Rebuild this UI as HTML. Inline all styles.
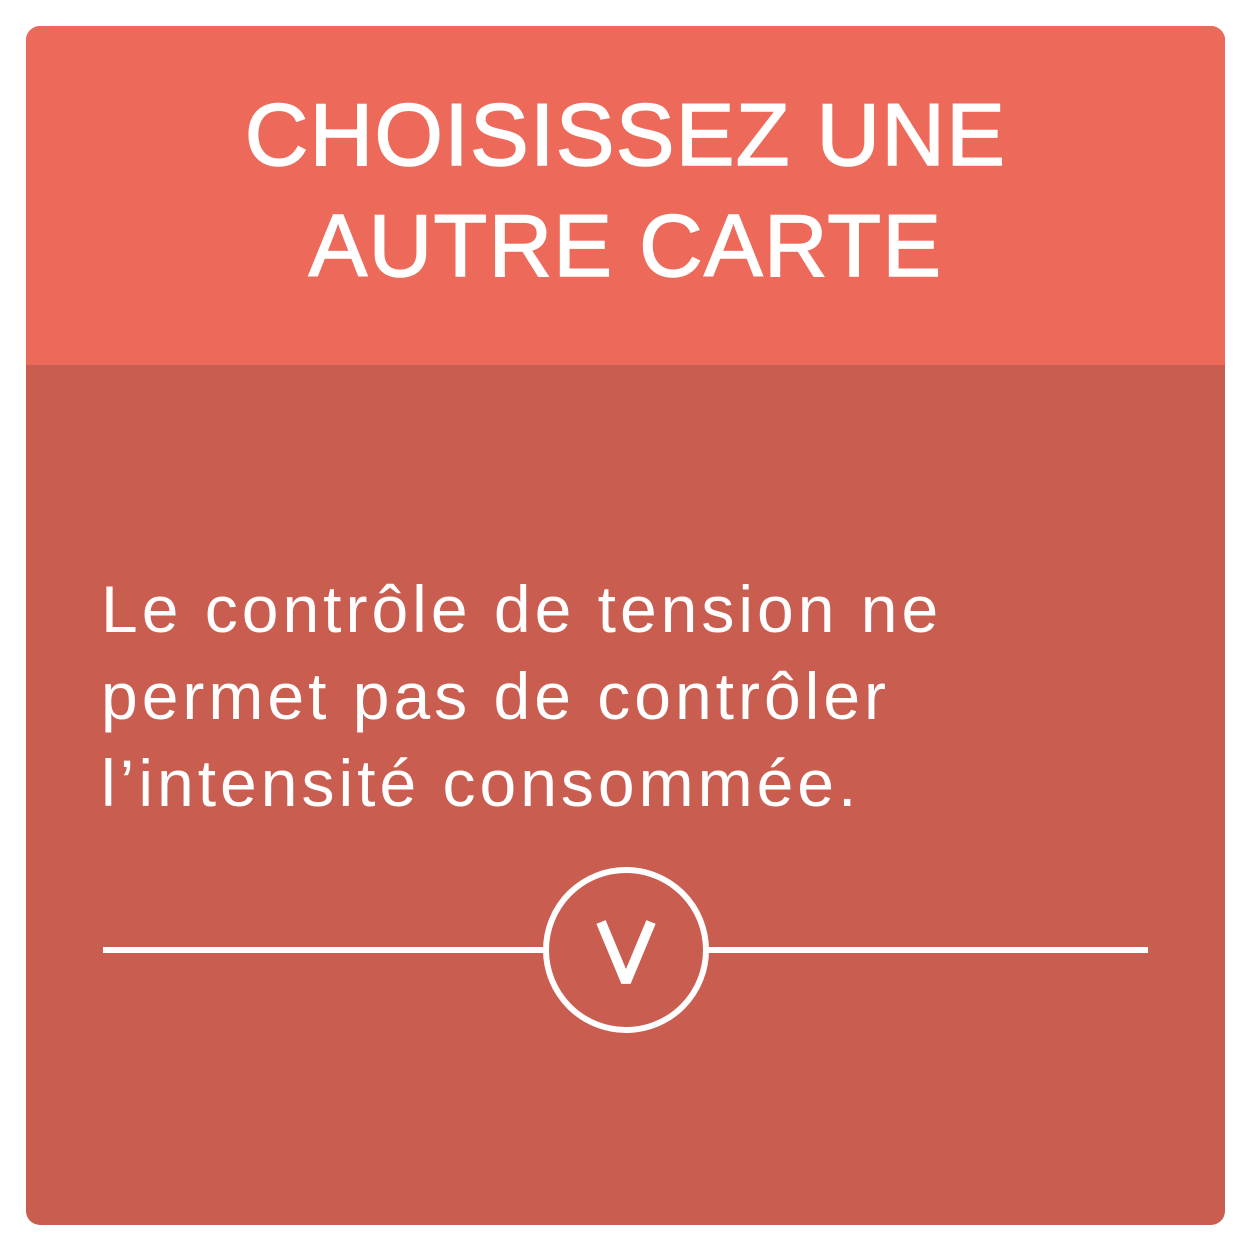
<!DOCTYPE html>
<html><head><meta charset="utf-8"><style>
html,body{margin:0;padding:0;background:#fff;width:1251px;height:1251px;overflow:hidden}
.card{position:absolute;left:26px;top:26px;width:1199px;height:1199px;border-radius:14px;overflow:hidden;background:#C95D50}
.head{position:absolute;left:0;top:0;width:100%;height:339px;background:#ED6A5B}
.t{position:absolute;left:0;width:100%;text-align:center;color:#fff;font-family:"Liberation Sans",sans-serif;font-size:88px;letter-spacing:1.3px;line-height:1;-webkit-text-stroke:1.5px #fff}
.b{position:absolute;left:75px;top:540px;color:#fff;font-family:"Liberation Sans",sans-serif;font-size:66px;line-height:87px;letter-spacing:4px;white-space:nowrap}
</style></head><body>
<div class="card">
<div class="head"></div>
<div class="t" style="top:65px">CHOISISSEZ UNE</div>
<div class="t" style="top:176px">AUTRE CARTE</div>
<div class="b">Le contrôle de tension ne<br>permet pas de contrôler<br>l’intensité consommée.</div>
</div>
<svg width="1251" height="1251" style="position:absolute;left:0;top:0">
<line x1="103" y1="950" x2="545" y2="950" stroke="#fff" stroke-width="6"/>
<line x1="707" y1="950" x2="1148" y2="950" stroke="#fff" stroke-width="6"/>
<circle cx="626" cy="950" r="80" fill="none" stroke="#fff" stroke-width="6"/>
<path d="M601 922 L626 982 L651 922" fill="none" stroke="#fff" stroke-width="10" stroke-linejoin="bevel"/>
</svg>
</body></html>
